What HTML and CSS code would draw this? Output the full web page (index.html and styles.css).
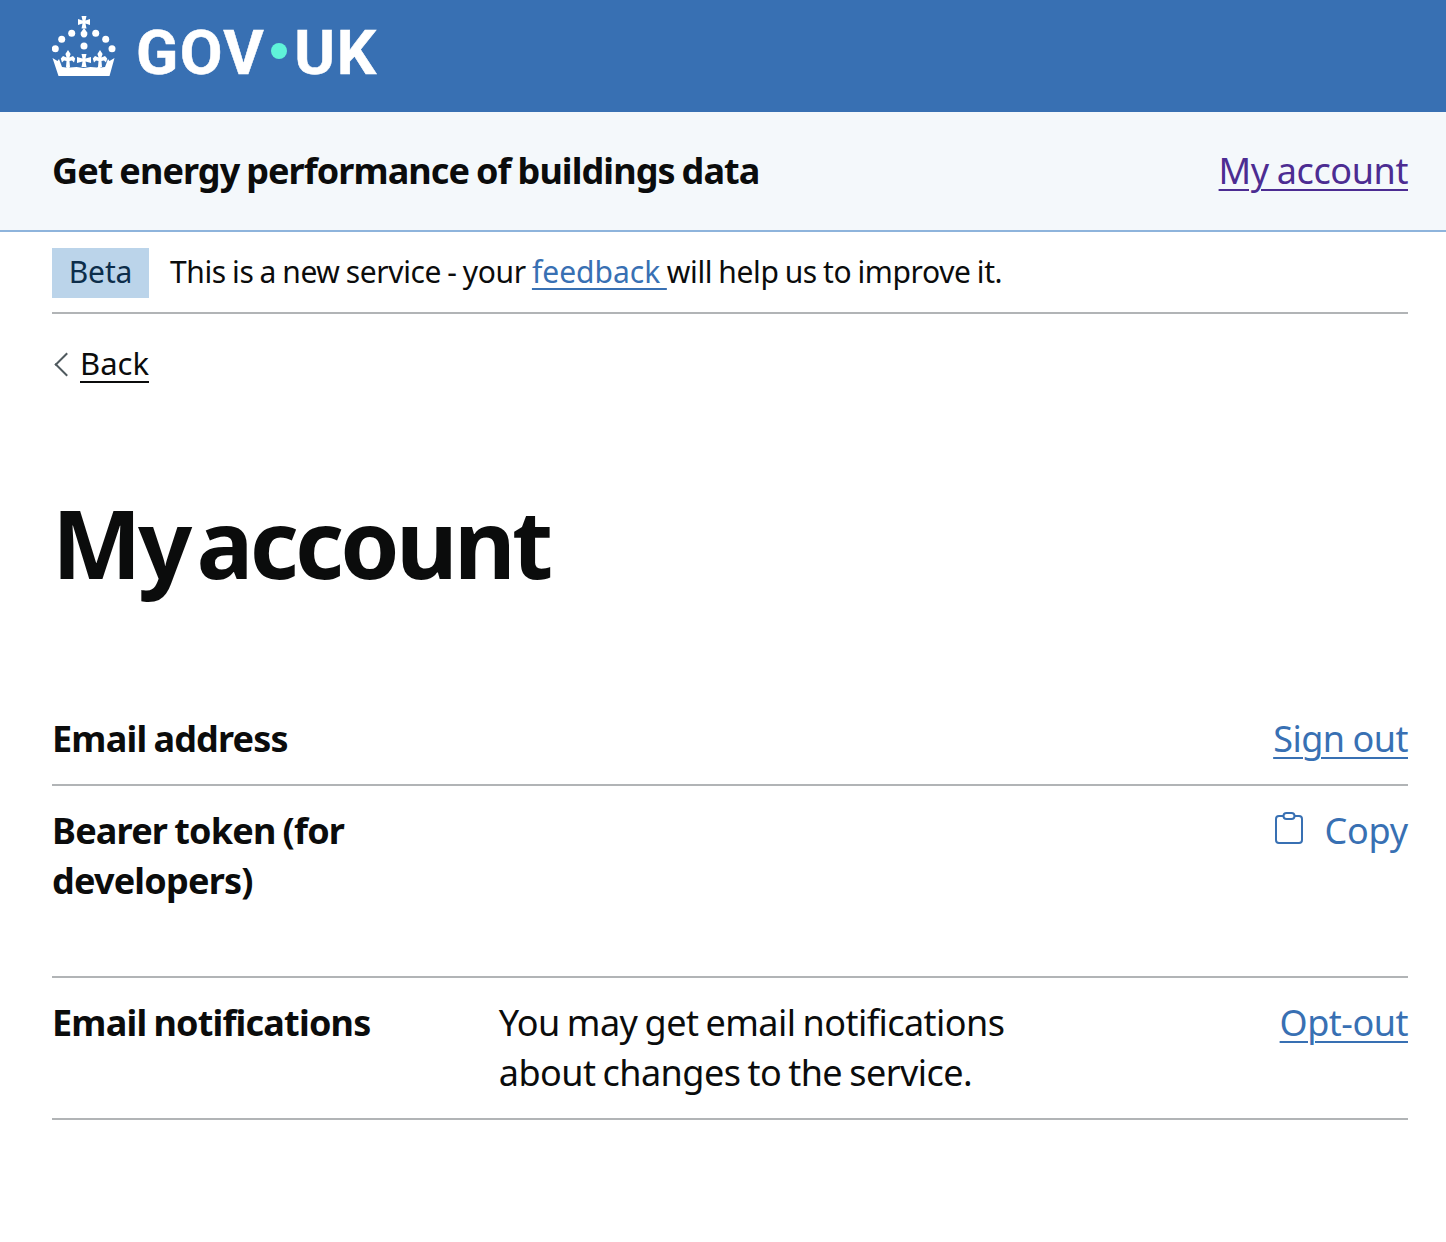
FILE: index.html
```html
<!DOCTYPE html>
<html lang="en">
<head>
<meta charset="utf-8">
<title>My account</title>
<link rel="stylesheet" href="styles.css">
</head>
<body>
<header class="topbar">
  <a class="logo" href="#">
    <svg class="crown" viewBox="52 14 64 64" width="64" height="64" aria-hidden="true">
      <defs>
        <path id="fleur" d="M0 0L2.600 4 1.400 7.500 5 6 7.200 8.500 6 12.500 4 10.500 1.500 11 2 17H-2L-1.500 11-4 10.500-6 12.500-7.200 8.500-5 6-1.400 7.500-2.600 4Z"/>
      </defs>
      <g fill="#fff">
        <path d="M81.500 16h5l-1 4.500 4.500-1.500v6l-4.500-1.500 1 5h-5l1-5-4.500 1.500v-6l4.500 1.500z"/>
        <path d="M84 28l3.200 4.500a3.400 3.800 0 1 1-6.400 0z"/>
        <circle cx="71.700" cy="33.300" r="3.500"/>
        <circle cx="95.700" cy="33.300" r="3.500"/>
        <circle cx="61.700" cy="39.300" r="3.500"/>
        <circle cx="105.700" cy="39.300" r="3.500"/>
        <circle cx="55.300" cy="48.700" r="3.500"/>
        <circle cx="112" cy="48.700" r="3.500"/>
        <circle cx="84" cy="46" r="3.500"/>
        <path d="M81.500 54h5l-1 4.500 5.500-1.500v6l-5.500-1.500 1 5.500h-5l1-5.500-5.500 1.500v-6l5.500 1.500z"/>
        <use href="#fleur" x="68" y="50"/>
        <use href="#fleur" x="100" y="50"/>
        <path d="M52.500 58l5 3 1.500-2 3 8 4 .5 2-1 2 1 6.500-.5 7 1 7-1 6.500.5 2-1 2 1 4-.5 3-8 1.500 2 5-3L109.500 76H58.500z"/>
      </g>
    </svg>
    <span class="logo-text">GOV</span><span class="logo-dot"></span><span class="logo-text">UK</span>
  </a>
</header>

<div class="service-bar">
  <a class="service-name" href="#">Get energy performance of buildings data</a>
  <a class="account-link" href="#">My account</a>
</div>

<main class="page">
  <div class="phase">
    <strong class="tag">Beta</strong>
    <span class="phase-text">This is a new service - your <a class="link" href="#">feedback </a>will help us to improve it.</span>
  </div>

  <a class="back" href="#">Back</a>

  <h1 class="title">My account</h1>

  <dl class="summary">
    <div class="row">
      <dt class="key">Email address</dt>
      <dd class="value"></dd>
      <dd class="action"><a class="link" href="#">Sign out</a></dd>
    </div>
    <div class="row row-token">
      <dt class="key">Bearer token (for developers)</dt>
      <dd class="value"></dd>
      <dd class="action">
        <a class="copy" href="#">
          <svg class="copy-icon" viewBox="0 0 30 34" width="30" height="34" aria-hidden="true">
            <path d="M9.500 5H5a3 3 0 0 0-3 3v21a3 3 0 0 0 3 3h20a3 3 0 0 0 3-3V8a3 3 0 0 0-3-3h-4.500" fill="none" stroke="#3870b3" stroke-width="2"/>
            <rect x="9.500" y="2" width="11" height="6" rx="3" fill="none" stroke="#3870b3" stroke-width="2"/>
          </svg>
          <span>Copy</span>
        </a>
      </dd>
    </div>
    <div class="row">
      <dt class="key">Email notifications</dt>
      <dd class="value">You may get email notifications about changes to the service.</dd>
      <dd class="action"><a class="link" href="#">Opt-out</a></dd>
    </div>
  </dl>
</main>
</body>
</html>
```

FILE: styles.css
```css
* { box-sizing: border-box; }

html, body { margin: 0; padding: 0; }

body {
  background: #fff;
  color: #0b0c0c;
  font-family: "Noto Sans", "Liberation Sans", sans-serif;
  font-size: 36px;
  line-height: 50px;
  height: 1242px;
  overflow: hidden;
}

.topbar {
  height: 112px;
  background: #3870b3;
  padding: 0 52px;
  display: flex;
  align-items: flex-start;
}

.logo {
  display: flex;
  align-items: center;
  height: 102px;
  color: #fff;
  text-decoration: none;
}

.crown { flex: none; align-self: flex-start; margin: 14px 20px 0 0; }

.logo-text {
  font-family: Roboto, "Liberation Sans", Arial, sans-serif;
  font-weight: 700;
  font-size: 62px;
  line-height: 100px;
  margin-top: 4px;
  letter-spacing: 1.500px;
  -webkit-text-stroke: 0.500px #fff;
}

.logo-dot {
  width: 16px;
  height: 16px;
  margin: 0 7px 0 6px;
  border-radius: 50%;
  background: #5ff3d9;
}

.service-bar {
  height: 120px;
  background: #f4f8fb;
  border-bottom: 2px solid #8eb4dc;
  padding: 0 38px 0 52px;
  display: flex;
  justify-content: space-between;
  align-items: center;
}

.service-name {
  color: #0b0c0c;
  font-weight: 700;
  text-decoration: none;
  letter-spacing: -0.920px;
  word-spacing: -1.500px;
}

.account-link {
  color: #4c2c92;
  text-decoration: underline;
  text-underline-offset: 5px;
  text-decoration-thickness: 2px;
  letter-spacing: -0.400px;
  word-spacing: -1px;
}

.page { padding: 16px 38px 0 52px; }

.phase {
  display: flex;
  align-items: center;
  gap: 21px;
  padding-bottom: 14px;
  border-bottom: 2px solid #b1b4b6;
  box-sizing: content-box;
  height: 50px;
  font-size: 30px;
  line-height: 50px;
}

.phase-text {
  letter-spacing: -0.380px;
  word-spacing: -1.200px;
  margin-top: -2px;
}

.phase-text .link {
  letter-spacing: 0;
  word-spacing: inherit;
}

.tag {
  width: 97px;
  height: 50px;
  background: #bbd4ea;
  color: #0c2d4a;
  font-weight: 400;
  text-align: center;
  line-height: 48px;
  letter-spacing: -0.100px;
}

.link {
  color: #3870b3;
  text-decoration: underline;
  text-underline-offset: 5px;
  text-decoration-thickness: 2px;
  letter-spacing: -0.500px;
  word-spacing: -1px;
}

.back {
  position: relative;
  display: inline-block;
  margin-top: 26px;
  margin-left: 28px;
  font-size: 31px;
  line-height: 46px;
  color: #0b0c0c;
  text-decoration: underline;
  text-underline-offset: 6px;
  text-decoration-thickness: 2px;
}

.back::before {
  content: "";
  position: absolute;
  left: -22px;
  top: 16px;
  width: 15px;
  height: 15px;
  border-left: 2px solid #505a5f;
  border-bottom: 2px solid #505a5f;
  transform: rotate(45deg);
}

.title {
  margin: 105px 0 102px;
  font-size: 95px;
  line-height: 100px;
  font-weight: 700;
  letter-spacing: -3.700px;
  word-spacing: -13px;
}

.summary { margin: 0; }

.row {
  display: grid;
  grid-template-columns: 30% 50% 20%;
  padding: 20px 0;
  border-bottom: 2px solid #b1b4b6;
}

.row-token { padding-bottom: 70px; }

.key {
  font-weight: 700;
  padding-right: 40px;
  letter-spacing: -0.800px;
  word-spacing: -1.500px;
}

.value {
  margin: 0;
  padding-right: 40px;
  padding-left: 40px;
  letter-spacing: -0.550px;
  word-spacing: -1.700px;
}

.action {
  margin: 0;
  text-align: right;
}

.copy {
  display: inline-flex;
  align-items: center;
  gap: 20px;
  color: #3870b3;
  text-decoration: none;
  letter-spacing: -0.200px;
}

.copy-icon { flex: none; margin-top: -7px; }
```
